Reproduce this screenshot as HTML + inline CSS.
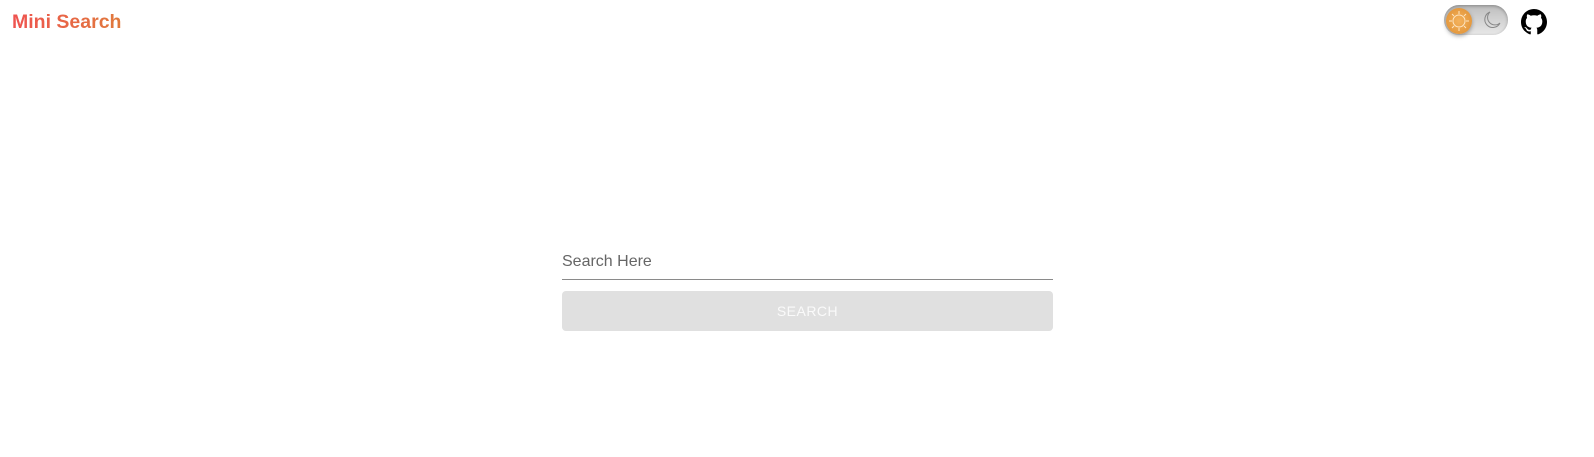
<!DOCTYPE html>
<html><head><style>
body{margin:0;width:1594px;height:457px;background:#fff;font-family:"Liberation Sans",sans-serif;position:relative;overflow:hidden}
.logo{position:absolute;left:12px;top:11px;font-size:19.5px;font-weight:bold;background:linear-gradient(90deg,#ef5350,#e07a3c);-webkit-background-clip:text;color:transparent}
.tog{position:absolute;left:1444px;top:5px;width:64px;height:30px;border-radius:15px;background:linear-gradient(#bdbdbd,#e8e8e8);box-shadow:inset 0 1px 3px rgba(0,0,0,.3)}
.knob{position:absolute;left:2px;top:3px;width:26px;height:26px;border-radius:50%;background:radial-gradient(#f4b25c,#dd8e32);box-shadow:0 2px 4px rgba(0,0,0,.35)}
.input{position:absolute;left:562px;top:253px;width:491px;height:26px;border-bottom:1px solid #8a8a8a;color:#666;font-size:16px}
.btn{position:absolute;left:562px;top:291px;width:491px;height:40px;background:#e0e0e0;border-radius:4px;color:#fafafa;font-size:14px;text-align:center;line-height:40px;letter-spacing:.5px}
</style></head><body>
<div class="logo">Mini Search</div>
<div class="tog"><div class="knob">
<svg width="26" height="26" viewBox="0 0 26 26"><circle cx="13" cy="13" r="6" fill="none" stroke="#fde6c4" stroke-width="1"/><g stroke="#fde6c4" stroke-width="1"><line x1="13" y1="3" x2="13" y2="6"/><line x1="13" y1="20" x2="13" y2="23"/><line x1="3" y1="13" x2="6" y2="13"/><line x1="20" y1="13" x2="23" y2="13"/><line x1="6" y1="6" x2="8" y2="8"/><line x1="18" y1="18" x2="20" y2="20"/><line x1="6" y1="20" x2="8" y2="18"/><line x1="18" y1="8" x2="20" y2="6"/></g></svg></div>
<svg style="position:absolute;left:38px;top:5px" width="20" height="20" viewBox="0 0 20 20"><path d="M8 2 A8 8 0 1 0 18 13 A7 7 0 0 1 8 2Z" fill="none" stroke="#888" stroke-width="1"/></svg>
</div>
<svg style="position:absolute;left:1521px;top:9px" width="26" height="26" viewBox="0 0 16 16"><path fill="#000" d="M8 0C3.58 0 0 3.58 0 8c0 3.54 2.29 6.53 5.47 7.59.4.07.55-.17.55-.38 0-.19-.01-.82-.01-1.49-2.01.37-2.530-.49-2.69-.94-.09-.23-.48-.94-.82-1.13-.28-.15-.68-.52-.01-.53.63-.01 1.08.58 1.23.82.72 1.21 1.87.87 2.33.66.07-.52.28-.87.51-1.07-1.78-.2-3.64-.89-3.64-3.95 0-.87.31-1.59.82-2.15-.08-.2-.36-1.02.08-2.12 0 0 .67-.21 2.2.82.64-.18 1.32-.27 2-.27.68 0 1.36.09 2 .27 1.53-1.04 2.2-.82 2.2-.82.44 1.1.16 1.92.08 2.12.51.56.82 1.27.82 2.15 0 3.07-1.87 3.75-3.65 3.95.29.25.54.73.54 1.48 0 1.07-.01 1.93-.01 2.2 0 .21.15.46.55.38A8.013 8.013 0 0016 8c0-4.42-3.58-8-8-8z"/></svg>
<div class="input">Search Here</div>
<div class="btn">SEARCH</div>
</body></html>
